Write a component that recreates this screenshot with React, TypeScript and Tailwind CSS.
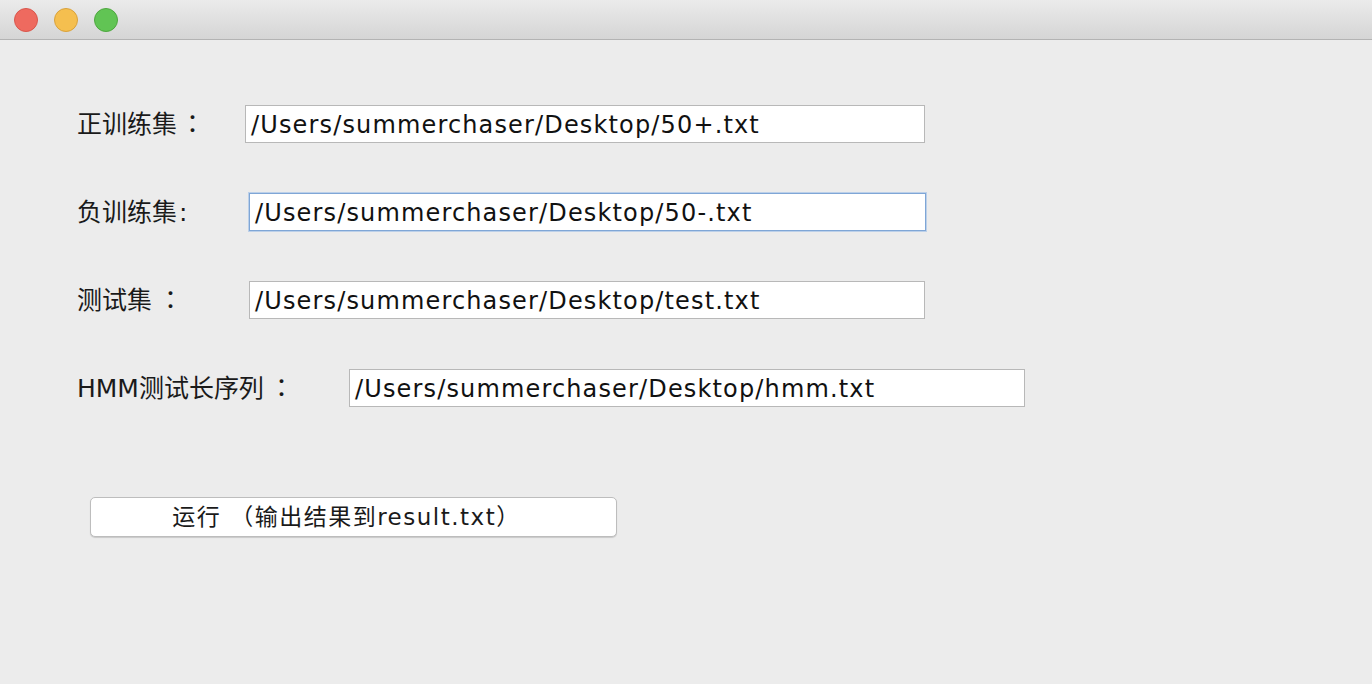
import React from "react";

function Row({ label, colon, colonMl, labelW, inputW, value, focused, mt }: { label: string; colon: string; colonMl: string; labelW: string; inputW: string; value: string; focused?: boolean; mt: string }) {
  return (
    <div className={`flex items-center ${mt}`}>
      <div className={`${labelW} shrink-0 text-[25px] text-[#1a1a1a] leading-none flex items-center`}>
        <span>{label}</span>
        <span className={colonMl}>{colon}</span>
      </div>
      <div
        className={`${inputW} h-[38px] bg-white flex items-center pl-[5px] pt-[1px] text-[24px] text-[#111] tracking-[1.15px] leading-none ${
          focused ? "border border-[#7fa6d6] shadow-[0_0_0_1px_rgba(140,180,230,0.5)]" : "border border-[#b8b8b8]"
        }`}
      >
        {value}
      </div>
    </div>
  );
}

export default function App() {
  return (
    <div
      className="w-[1372px] h-[684px] bg-[#ececec] overflow-hidden flex flex-col"
      style={{ fontFamily: '"DejaVu Sans", "Noto Sans CJK TC", sans-serif' }}
    >
      <div className="h-[40px] shrink-0 bg-gradient-to-b from-[#ebebeb] to-[#d5d5d5] border-b border-[#b3b3b3] flex items-center gap-[16px] pl-[14px]">
        <div className="w-[24px] h-[24px] rounded-full bg-[#ee6a5f] border border-[#d9564c]" />
        <div className="w-[24px] h-[24px] rounded-full bg-[#f5bf4f] border border-[#d9a23c]" />
        <div className="w-[24px] h-[24px] rounded-full bg-[#61c454] border border-[#4ea73f]" />
      </div>
      <div className="pl-[77px] flex flex-col">
        <Row mt="mt-[65px]" label="正训练集" colon="：" colonMl="ml-[3px]" labelW="w-[168px]" inputW="w-[680px]" value="/Users/summerchaser/Desktop/50+.txt" />
        <Row mt="mt-[50px]" label="负训练集" colon=":" colonMl="ml-[2px]" labelW="w-[172px]" inputW="w-[677px]" value="/Users/summerchaser/Desktop/50-.txt" focused />
        <Row mt="mt-[50px]" label="测试集" colon="：" colonMl="ml-[6px]" labelW="w-[172px]" inputW="w-[676px]" value="/Users/summerchaser/Desktop/test.txt" />
        <Row mt="mt-[50px]" label="HMM测试长序列" colon="：" colonMl="ml-[5px]" labelW="w-[272px]" inputW="w-[676px]" value="/Users/summerchaser/Desktop/hmm.txt" />
        <div
          className="mt-[90px] ml-[13px] w-[527px] h-[40px] bg-white border border-[#bdbdbd] rounded-[5px] shadow-[0_1px_1px_rgba(0,0,0,0.15)] flex items-center justify-center text-[23px] tracking-[1.5px] text-[#1a1a1a] pr-[14px] leading-none whitespace-pre"
          style={{ fontFamily: '"DejaVu Sans", "Noto Sans CJK SC", sans-serif' }}
        >
          运行 （输出结果到result.txt）
        </div>
      </div>
    </div>
  );
}
